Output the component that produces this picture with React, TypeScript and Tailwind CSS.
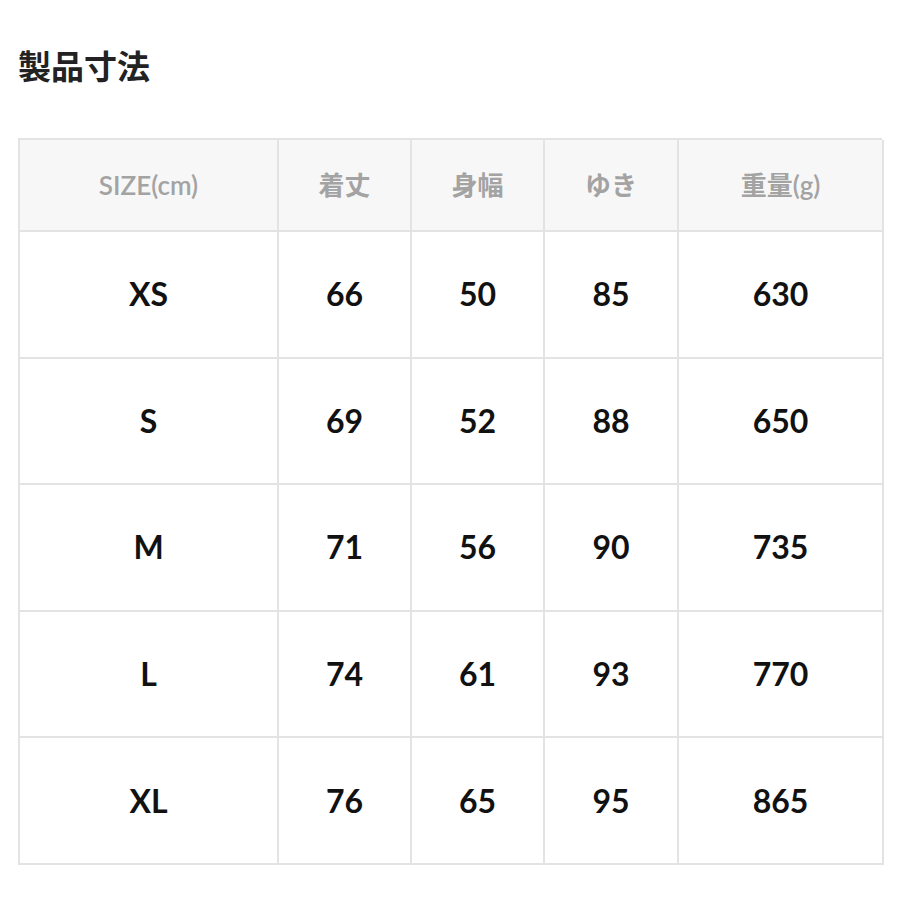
const headers = ["SIZE(cm)", "着丈", "身幅", "ゆき", "重量(g)"];

const rows = [
  ["XS", "66", "50", "85", "630"],
  ["S", "69", "52", "88", "650"],
  ["M", "71", "56", "90", "735"],
  ["L", "74", "61", "93", "770"],
  ["XL", "76", "65", "95", "865"],
];

const font = { fontFamily: "Lato, 'Noto Sans CJK JP', sans-serif" };

export default function App() {
  return (
    <div className="h-[900px] w-[900px] bg-white" style={font}>
      <div className="px-[18px] pt-[44px]">
        <h1 className="text-[33px] font-bold leading-[44px] text-[#222]">製品寸法</h1>
        <div className="mt-[50px] grid w-[864px] grid-cols-[259px_133px_133px_134px_205px] border-l-2 border-t-2 border-[#e3e3e3]">
          {headers.map((h) => (
            <div
              key={h}
              className="flex h-[92px] items-center justify-center border-b-2 border-r-2 border-[#e3e3e3] bg-[#f7f7f7] text-[26px] font-semibold text-[#a3a3a3]"
            >
              {h}
            </div>
          ))}
          {rows.map((r) =>
            r.map((c, i) => (
              <div
                key={r[0] + i}
                className="flex h-[126.6px] items-center justify-center border-b-2 border-r-2 border-[#e3e3e3] text-[32px] font-bold text-[#111]"
              >
                {c}
              </div>
            ))
          )}
        </div>
      </div>
    </div>
  );
}
